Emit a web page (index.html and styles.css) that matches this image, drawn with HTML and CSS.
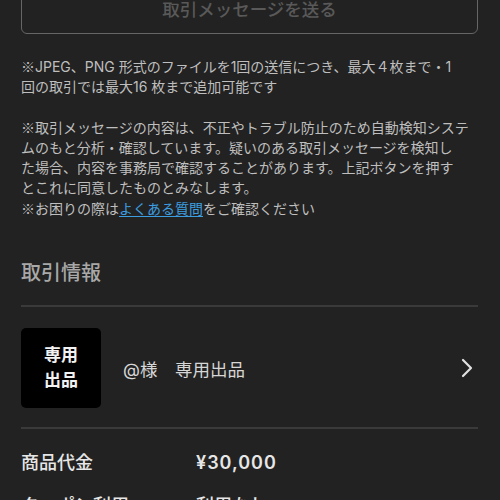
FILE: index.html
```html
<!DOCTYPE html>
<html lang="ja">
<head>
<meta charset="utf-8">
<link rel="stylesheet" href="styles.css">
</head>
<body>
<div class="page">
  <button class="send-btn" type="button">取引メッセージを送る</button>
  <p class="note note-first"><span class="kome">※</span>JPEG、PNG 形式のファイルを1回の送信につき、最大４枚まで・1<br>回の取引では最大16 枚まで追加可能です</p>
  <div class="note note-second">
    <p><span class="kome">※</span>取引メッセージの内容は、不正やトラブル防止のため自動検知システ<br>ムのもと分析・確認しています。疑いのある取引メッセージを検知し<br>た場合、内容を事務局で確認することがあります。上記ボタンを押す<br>とこれに同意したものとみなします。</p>
    <p><span class="kome">※</span>お困りの際は<a class="link" href="#">よくある質問</a>をご確認ください</p>
  </div>
  <h2 class="section-title">取引情報</h2>
  <div class="item">
    <div class="thumb"><span>専用</span><span>出品</span></div>
    <div class="item-name">@様　専用出品</div>
    <svg class="chevron" width="14" height="20" viewBox="0 0 14 20"><polyline points="3,2 11,10 3,18" fill="none" stroke="#e2e2e2" stroke-width="2.2" stroke-linecap="round" stroke-linejoin="round"/></svg>
  </div>
  <dl class="info">
    <div class="info-row"><dt>商品代金</dt><dd class="amount">¥30,000</dd></div>
    <div class="info-row"><dt>クーポン利用</dt><dd>利用なし</dd></div>
  </dl>
</div>
</body>
</html>
```

FILE: styles.css
```css
html, body {
  margin: 0;
  padding: 0;
  background: #222222;
  overflow: hidden;
}
body {
  font-family: Inter, "Noto Sans CJK JP", "Noto Sans", sans-serif;
  color: #bdbdbd;
}
.page {
  margin-top: -17px;
  padding: 0 22px 0 21px;
}
.send-btn {
  display: block;
  width: 100%;
  height: 51px;
  box-sizing: border-box;
  background: transparent;
  border: 1.5px solid #666666;
  border-radius: 6px;
  color: #595959;
  font-family: "Noto Sans CJK JP", sans-serif;
  font-size: 17.5px;
  font-weight: 500;
  padding: 0;
}
.note {
  font-size: 14px;
  line-height: 20.3px;
  color: #bebebe;
}
.kome {
  font-family: "Noto Sans CJK JP", sans-serif;
  line-height: 14px;
}
.note p {
  margin: 0;
}
.note-first {
  margin: 23px 0 0;
}
.note-second {
  margin-top: 20px;
}
.link {
  color: #3c9ee0;
  text-decoration: underline;
  text-underline-offset: 2px;
}
.section-title {
  margin: 40px 0 0;
  font-size: 20px;
  line-height: 28px;
  font-weight: 500;
  color: #a8a8a8;
  padding-bottom: 18px;
}
.item {
  display: flex;
  align-items: center;
  border-top: 2px solid #3a3a3a;
  border-bottom: 2px solid #3a3a3a;
  padding: 21px 0 19px;
}
.thumb {
  width: 80px;
  height: 80px;
  flex: none;
  background: #000;
  border-radius: 5px;
  display: flex;
  flex-direction: column;
  align-items: center;
  justify-content: center;
  color: #f2f2f2;
  font-weight: 700;
  font-size: 17px;
  line-height: 25px;
}
.item-name {
  flex: 1;
  margin-left: 22px;
  font-size: 17.5px;
  color: #d6d6d6;
}
.chevron {
  flex: none;
  margin-right: 4px;
}
.info {
  margin: 21px 0 0;
}
.info-row {
  display: flex;
  font-size: 18px;
  line-height: 26px;
  font-weight: 500;
  color: #e6e6e6;
  margin-bottom: 17px;
}
.info-row dt {
  width: 175px;
  flex: none;
}
.info-row dd {
  margin: 0;
}
.info-row .amount {
  font-weight: 600;
  letter-spacing: 1px;
}
```
